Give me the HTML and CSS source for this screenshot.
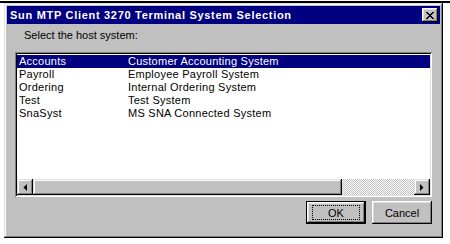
FILE: index.html
```html
<!DOCTYPE html>
<html lang="en">
<head>
    <meta charset="UTF-8">
    <title>Sun MTP Client 3270 Terminal System Selection</title>
    <link rel="stylesheet" href="styles.css">
</head>
<body>
    <div class="rule"></div>

    <div class="dialog">
        <div class="titlebar">
            <span class="title">Sun MTP Client 3270 Terminal System Selection</span>
            <button class="close-btn" aria-label="Close">
                <svg width="8" height="7" viewBox="0 0 8 7">
                    <path d="M0 0h2v1h1v1h2v-1h1v-1h2v1h-1v1h-1v1h-1v1h1v1h1v1h1v1h-2v-1h-1v-1h-2v1h-1v1h-2v-1h1v-1h1v-1h1v-1h-1v-1h-1v-1h-1z" fill="#000"/>
                </svg>
            </button>
        </div>

        <div class="content">
            <p class="prompt">Select the host system:</p>

            <div class="listbox">
                <div class="rows">
                    <div class="row selected"><span>Accounts</span><span>Customer Accounting System</span></div>
                    <div class="row"><span>Payroll</span><span>Employee Payroll System</span></div>
                    <div class="row"><span>Ordering</span><span>Internal Ordering System</span></div>
                    <div class="row"><span>Test</span><span>Test System</span></div>
                    <div class="row"><span>SnaSyst</span><span>MS SNA Connected System</span></div>
                </div>

                <!-- horizontal scrollbar -->
                <div class="hscroll">
                    <div class="arrow-btn">
                        <svg width="4" height="7" viewBox="0 0 4 7"><path d="M4 0v7L0.5 3.5z" fill="#000"/></svg>
                    </div>
                    <div class="thumb"></div>
                    <div class="track"></div>
                    <div class="arrow-btn">
                        <svg width="4" height="7" viewBox="0 0 4 7"><path d="M0 0v7L3.5 3.5z" fill="#000"/></svg>
                    </div>
                </div>
            </div>

            <div class="actions">
                <button class="btn default"><span class="focus">OK</span></button>
                <button class="btn">Cancel</button>
            </div>
        </div>
    </div>
</body>
</html>
```

FILE: styles.css
```css
/* Global */
* {
    box-sizing: border-box;
    margin: 0;
    padding: 0;
}

body {
    font-family: 'Liberation Sans', Arial, sans-serif;
    font-size: 11px;
    background: #fff;
    color: #000;
    padding-top: 1px;
}

.rule {
    height: 2px;
    background: #000;
}

/* Dialog window */
.dialog {
    margin-left: 4px;
    width: 439px;
    background: #c0c0c0;
    padding: 3px;
    box-shadow: inset -1px -1px #000, inset 1px 1px #dfdfdf,
                inset -2px -2px #808080, inset 2px 2px #fff;
}

.titlebar {
    height: 18px;
    background: #000080;
    color: #fff;
    display: flex;
    align-items: center;
    justify-content: space-between;
    padding: 0 2px 0 3px;
}

.title {
    font-weight: bold;
    line-height: 18px;
    letter-spacing: 0.7px;
}

.close-btn {
    width: 16px;
    height: 14px;
    border: none;
    background: #c0c0c0;
    display: flex;
    align-items: center;
    justify-content: center;
    box-shadow: inset -1px -1px #000, inset 1px 1px #fff,
                inset -2px -2px #808080, inset 2px 2px #dfdfdf;
}

.content {
    padding: 5px 8px 11px 8px;
}

.prompt {
    line-height: 13px;
    padding-left: 9px;
}

/* List box */
.listbox {
    margin-top: 10px;
    height: 145px;
    background: #fff;
    padding: 2px;
    display: flex;
    flex-direction: column;
    box-shadow: inset 1px 1px #808080, inset -1px -1px #fff,
                inset 2px 2px #000, inset -2px -2px #dfdfdf;
}

.rows {
    flex: 1;
    padding-top: 1px;
}

.row {
    display: grid;
    grid-template-columns: 109px 1fr;
    height: 13px;
    line-height: 13px;
    padding-left: 2px;
    letter-spacing: 0.25px;
}

.row.selected {
    background: #000080;
    color: #fff;
}

/* Scrollbar */
.hscroll {
    height: 16px;
    display: flex;
}

.arrow-btn {
    width: 16px;
    background: #c0c0c0;
    display: flex;
    align-items: center;
    justify-content: center;
    box-shadow: inset -1px -1px #000, inset 1px 1px #dfdfdf,
                inset -2px -2px #808080, inset 2px 2px #fff;
}

.thumb {
    width: 309px;
    background: #c0c0c0;
    box-shadow: inset -1px -1px #000, inset 1px 1px #dfdfdf,
                inset -2px -2px #808080, inset 2px 2px #fff;
}

.track {
    flex: 1;
    background: repeating-conic-gradient(#c0c0c0 0 25%, #fff 0 50%) 0 0 / 2px 2px;
}

/* Buttons */
.actions {
    margin-top: 4px;
    display: flex;
    justify-content: flex-end;
    gap: 6px;
}

.btn {
    width: 60px;
    height: 23px;
    font-family: inherit;
    font-size: 11px;
    color: #000;
    border: none;
    background: #c0c0c0;
    display: flex;
    align-items: center;
    justify-content: center;
    box-shadow: inset -1px -1px #000, inset 1px 1px #fff,
                inset -2px -2px #808080, inset 2px 2px #dfdfdf;
}

.btn.default {
    border: 1px solid #000;
}

.focus {
    display: flex;
    align-items: center;
    justify-content: center;
    width: 48px;
    height: 15px;
    border: 1px dotted #000;
}
```
